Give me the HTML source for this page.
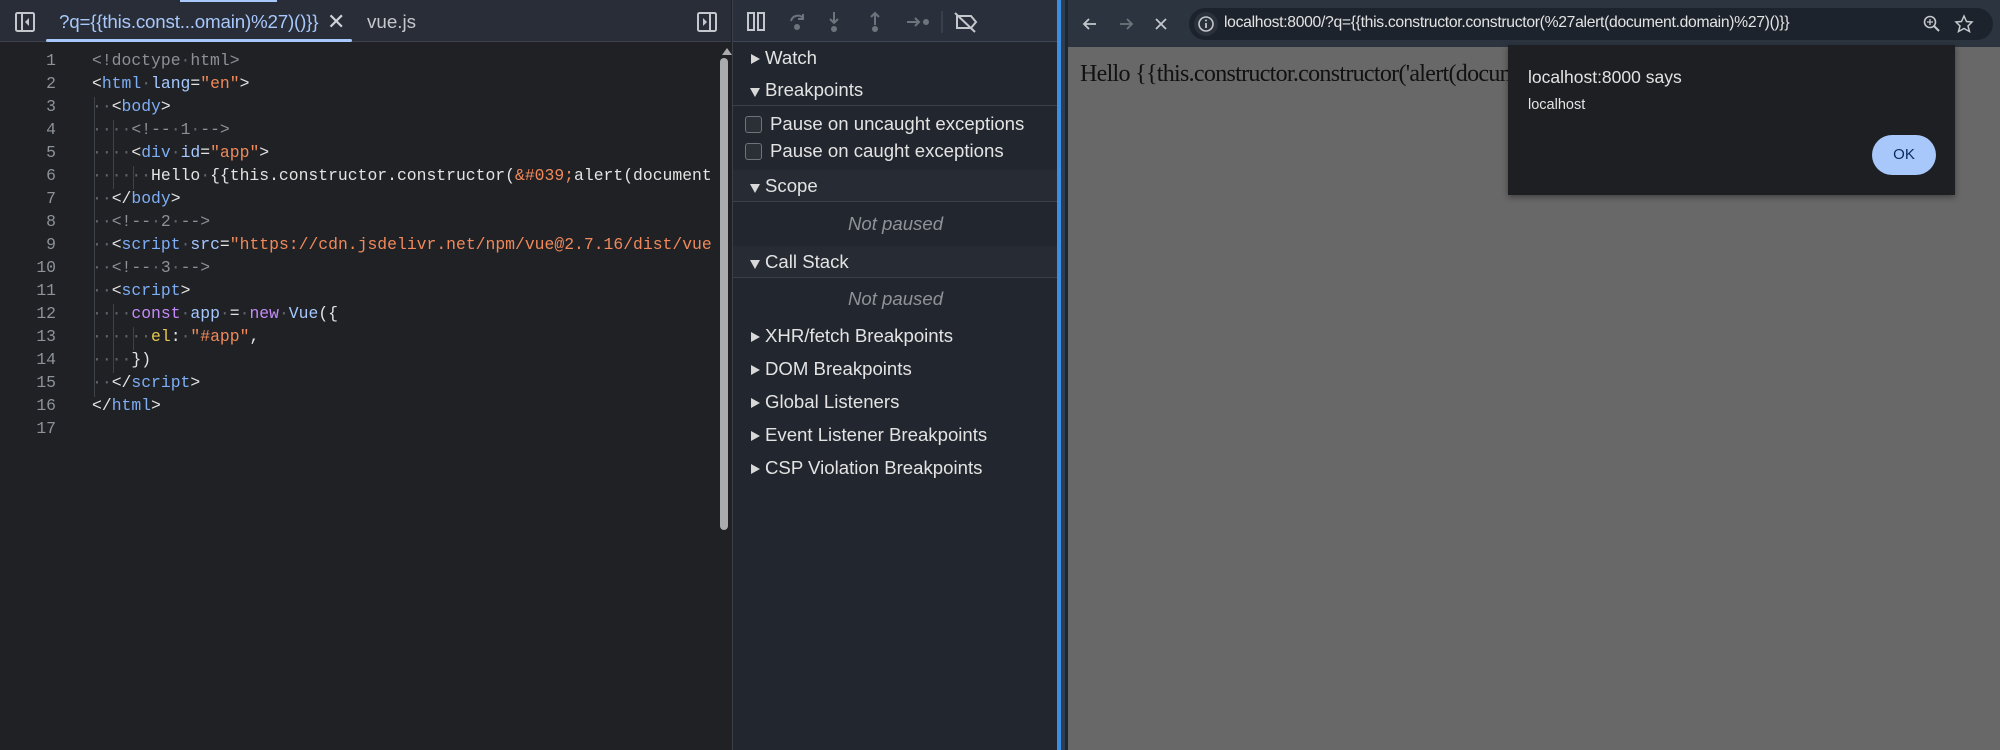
<!DOCTYPE html>
<html><head><meta charset="utf-8"><style>
*{margin:0;padding:0;box-sizing:border-box}
body{width:2000px;height:750px;overflow:hidden;background:#202124;font-family:"Liberation Sans",sans-serif;position:relative}
.abs{position:absolute}
#ed{left:0;top:0;width:731px;height:750px;background:#1f2125}
#tabs{left:0;top:0;width:731px;height:42px;background:#282d37;border-bottom:1px solid #3c414b}
.ln{position:absolute;left:0;width:56px;text-align:right;color:#8e939a;font:16.4px "Liberation Mono",monospace}
.cl{position:absolute;left:92px;white-space:pre;color:#e3e3e3;font:16.4px "Liberation Mono",monospace}
.d{color:#5f636a}.t{color:#7eaef5}.a{color:#a6c8ff}.s{color:#f1895a}.c{color:#8c9096}.k{color:#c58af9}.y{color:#e6c84e}
.g{position:absolute;width:1px;background:#3e4249}
#dbg{left:732px;top:0;width:325px;height:750px;background:#22262e;border-left:1px solid #3a3f48}
#dtb{left:0;top:0;width:325px;height:42px;background:#2a303b;border-bottom:1px solid #404652}
.row{position:absolute;left:0;width:325px;color:#e3e3e3;font-size:18.6px;height:24px}
.row .tr,.row .td{position:absolute;left:18px;top:7px;width:0;height:0}
.row .tr{border-left:9px solid #d8d8d8;border-top:5.5px solid transparent;border-bottom:5.5px solid transparent}
.row .td{top:9px;border-top:9px solid #d8d8d8;border-left:5.5px solid transparent;border-right:5.5px solid transparent;left:17px}
.row .lb{position:absolute;left:32px;top:0}
.hdr{background:#272b33;border-bottom:1px solid #3b404a}
.np{position:absolute;width:325px;text-align:center;color:#8f9399;font-style:italic;font-size:18.6px}
.cb{position:absolute;left:12px;width:17px;height:17px;border:1.5px solid #6f737a;border-radius:3px;background:#2b2f36}
</style></head><body>
<div id="ed" class="abs">
 <div id="tabs" class="abs">
  <div class="abs" style="left:180px;top:0;width:97px;height:2px;background:#a8c7fa"></div>
  <svg class="abs" style="left:15px;top:12px" width="20" height="20" viewBox="0 0 20 20"><rect x="1" y="1" width="18" height="18" rx="1.5" fill="none" stroke="#c4c7cc" stroke-width="2"/><line x1="7" y1="1" x2="7" y2="19" stroke="#c4c7cc" stroke-width="2"/><path d="M14 6 L10 10 L14 14Z" fill="#c4c7cc"/></svg>
  <div class="abs" style="left:59px;top:11px;color:#a8c7fa;font-size:18.8px;letter-spacing:-0.2px">?q={{this.const...omain)%27)()}}</div>
  <div class="abs" style="left:327px;top:9px;color:#d0d3d8;font-size:22px">✕</div>
  <div class="abs" style="left:367px;top:11px;color:#c4c7cc;font-size:18.8px">vue.js</div>
  <div class="abs" style="left:46px;top:39px;width:306px;height:3px;border-radius:2px;background:#a8c7fa"></div>
  <svg class="abs" style="left:697px;top:12px" width="20" height="20" viewBox="0 0 20 20"><rect x="1" y="1" width="18" height="18" rx="1.5" fill="none" stroke="#c4c7cc" stroke-width="2"/><line x1="13" y1="1" x2="13" y2="19" stroke="#c4c7cc" stroke-width="2"/><path d="M6 6 L10 10 L6 14Z" fill="#c4c7cc"/></svg>
 </div>
 <div class="abs" style="left:722px;top:48px;width:0;height:0;border-bottom:7px solid #a9abae;border-left:5px solid transparent;border-right:5px solid transparent"></div>
 <div class="abs" style="left:720px;top:58px;width:8px;height:472px;background:#a9abae;border-radius:4px"></div>
 <div class="g" style="left:94px;top:97px;height:300px"></div>
 <div class="g" style="left:113px;top:120px;height:69px"></div>
 <div class="g" style="left:133px;top:166px;height:23px"></div>
 <div class="g" style="left:113px;top:304px;height:69px"></div>
 <div class="g" style="left:133px;top:327px;height:23px"></div>
 <div class="ln" style="top:51px">1</div><div class="cl" style="top:51px"><span class="c">&lt;!doctype<span class="d">·</span>html&gt;</span></div>
 <div class="ln" style="top:74px">2</div><div class="cl" style="top:74px">&lt;<span class="t">html</span><span class="d">·</span><span class="a">lang</span>=<span class="s">"en"</span>&gt;</div>
 <div class="ln" style="top:97px">3</div><div class="cl" style="top:97px"><span class="d">··</span>&lt;<span class="t">body</span>&gt;</div>
 <div class="ln" style="top:120px">4</div><div class="cl" style="top:120px"><span class="d">····</span><span class="c">&lt;!--<span class="d">·</span>1<span class="d">·</span>--&gt;</span></div>
 <div class="ln" style="top:143px">5</div><div class="cl" style="top:143px"><span class="d">····</span>&lt;<span class="t">div</span><span class="d">·</span><span class="a">id</span>=<span class="s">"app"</span>&gt;</div>
 <div class="ln" style="top:166px">6</div><div class="cl" style="top:166px"><span class="d">······</span>Hello<span class="d">·</span>{{this.constructor.constructor(<span class="s">&amp;#039;</span>alert(document</div>
 <div class="ln" style="top:189px">7</div><div class="cl" style="top:189px"><span class="d">··</span>&lt;/<span class="t">body</span>&gt;</div>
 <div class="ln" style="top:212px">8</div><div class="cl" style="top:212px"><span class="d">··</span><span class="c">&lt;!--<span class="d">·</span>2<span class="d">·</span>--&gt;</span></div>
 <div class="ln" style="top:235px">9</div><div class="cl" style="top:235px"><span class="d">··</span>&lt;<span class="t">script</span><span class="d">·</span><span class="a">src</span>=<span class="s">"https://cdn.jsdelivr.net/npm/vue@2.7.16/dist/vue</span></div>
 <div class="ln" style="top:258px">10</div><div class="cl" style="top:258px"><span class="d">··</span><span class="c">&lt;!--<span class="d">·</span>3<span class="d">·</span>--&gt;</span></div>
 <div class="ln" style="top:281px">11</div><div class="cl" style="top:281px"><span class="d">··</span>&lt;<span class="t">script</span>&gt;</div>
 <div class="ln" style="top:304px">12</div><div class="cl" style="top:304px"><span class="d">····</span><span class="k">const</span><span class="d">·</span><span class="a">app</span><span class="d">·</span>=<span class="d">·</span><span class="k">new</span><span class="d">·</span><span class="a">Vue</span>({</div>
 <div class="ln" style="top:327px">13</div><div class="cl" style="top:327px"><span class="d">······</span><span class="y">el</span>:<span class="d">·</span><span class="s">"#app"</span>,</div>
 <div class="ln" style="top:350px">14</div><div class="cl" style="top:350px"><span class="d">····</span>})</div>
 <div class="ln" style="top:373px">15</div><div class="cl" style="top:373px"><span class="d">··</span>&lt;/<span class="t">script</span>&gt;</div>
 <div class="ln" style="top:396px">16</div><div class="cl" style="top:396px">&lt;/<span class="t">html</span>&gt;</div>
 <div class="ln" style="top:419px">17</div>
</div>

<div id="dbg" class="abs">
 <div id="dtb" class="abs">
  <svg class="abs" style="left:14px;top:11px" width="300" height="22" viewBox="0 0 300 22">
   <rect x="1" y="2" width="6" height="17" fill="none" stroke="#c4c7cc" stroke-width="2"/><rect x="11" y="2" width="6" height="17" fill="none" stroke="#c4c7cc" stroke-width="2"/>
   <path d="M44 10 a7 7 0 0 1 12 -3 M56 3 v5 h-5" fill="none" stroke="#6f747c" stroke-width="2"/><circle cx="50" cy="16" r="3" fill="#6f747c"/>
   <path d="M87 1 v11 M83 8 l4 4 4 -4" fill="none" stroke="#6f747c" stroke-width="2"/><circle cx="87" cy="18" r="3" fill="#6f747c"/>
   <path d="M128 14 v-12 M124 6 l4 -4 4 4" fill="none" stroke="#6f747c" stroke-width="2"/><circle cx="128" cy="18" r="3" fill="#6f747c"/>
   <path d="M160 11 h12 M168 7 l4 4 -4 4" fill="none" stroke="#6f747c" stroke-width="2"/><circle cx="179" cy="11" r="3" fill="#6f747c"/>
   <line x1="195" y1="0" x2="195" y2="22" stroke="#4a4f58" stroke-width="1"/>
   <path d="M210 5 h14 l5 6 -5 6 h-14z" fill="none" stroke="#c4c7cc" stroke-width="2"/><line x1="208" y1="2" x2="228" y2="21" stroke="#c4c7cc" stroke-width="2"/>
  </svg>
 </div>
 <div class="row" style="top:47px"><span class="tr"></span><span class="lb">Watch</span></div>
 <div class="row" style="top:79px;height:27px;border-bottom:1px solid #3b404a"><span class="td"></span><span class="lb">Breakpoints</span></div>
 <div class="cb" style="top:116px"></div><div class="row" style="top:113px"><span class="lb" style="left:37px">Pause on uncaught exceptions</span></div>
 <div class="cb" style="top:143px"></div><div class="row" style="top:140px"><span class="lb" style="left:37px">Pause on caught exceptions</span></div>
 <div class="row hdr" style="top:170px;height:32px"><span class="td" style="top:14px"></span><span class="lb" style="top:5px">Scope</span></div>
 <div class="np" style="top:213px">Not paused</div>
 <div class="row hdr" style="top:246px;height:32px"><span class="td" style="top:14px"></span><span class="lb" style="top:5px">Call Stack</span></div>
 <div class="np" style="top:288px">Not paused</div>
 <div class="row" style="top:325px"><span class="tr"></span><span class="lb">XHR/fetch Breakpoints</span></div>
 <div class="row" style="top:358px"><span class="tr"></span><span class="lb">DOM Breakpoints</span></div>
 <div class="row" style="top:391px"><span class="tr"></span><span class="lb">Global Listeners</span></div>
 <div class="row" style="top:424px"><span class="tr"></span><span class="lb">Event Listener Breakpoints</span></div>
 <div class="row" style="top:457px"><span class="tr"></span><span class="lb">CSP Violation Breakpoints</span></div>
</div>

<div class="abs" style="left:1057px;top:0;width:4px;height:750px;background:#3a8ee6"></div>
<div class="abs" style="left:1061px;top:0;width:4px;height:750px;background:#2e3e4e"></div>
<div class="abs" style="left:1065px;top:0;width:4px;height:750px;background:#1f2630"></div>
<div class="abs" style="left:1068px;top:0;width:932px;height:47px;background:#2c3440"></div>
<div class="abs" style="left:1068px;top:47px;width:932px;height:703px;background:#686868"></div>
<svg class="abs" style="left:1080px;top:14px" width="100" height="20" viewBox="0 0 100 20">
 <path d="M16 10 H4 M9 5 L4 10 9 15" fill="none" stroke="#c4c7cc" stroke-width="1.8"/>
 <path d="M40 10 H52 M47 5 L52 10 47 15" fill="none" stroke="#6f747c" stroke-width="1.8"/>
 <path d="M76 5 L86 15 M86 5 L76 15" fill="none" stroke="#c4c7cc" stroke-width="1.8"/>
</svg>
<div class="abs" style="left:1189px;top:8px;width:804px;height:32px;border-radius:16px;background:#1d232c"></div>
<div class="abs" style="left:1194px;top:12px;width:24px;height:24px;border-radius:12px;background:#2a313b"></div>
<svg class="abs" style="left:1197px;top:15px" width="18" height="18" viewBox="0 0 18 18"><circle cx="9" cy="9" r="7" fill="none" stroke="#c4c7cc" stroke-width="1.6"/><line x1="9" y1="8" x2="9" y2="13" stroke="#c4c7cc" stroke-width="1.8"/><circle cx="9" cy="5.5" r="1" fill="#c4c7cc"/></svg>
<div class="abs" style="left:1224px;top:14px;color:#e3e3e3;font-size:15.7px;letter-spacing:-0.3px">localhost:8000/?q={{this.constructor.constructor(%27alert(document.domain)%27)()}}</div>
<svg class="abs" style="left:1922px;top:14px" width="60" height="20" viewBox="0 0 60 20"><circle cx="8" cy="8" r="5.5" fill="none" stroke="#c4c7cc" stroke-width="1.6"/><line x1="12" y1="12" x2="17" y2="17" stroke="#c4c7cc" stroke-width="2"/><path d="M8 5v6M5 8h6" stroke="#c4c7cc" stroke-width="1.3"/><path d="M42 2 L44.5 7.5 50 8 46 12 47.5 17.5 42 14.5 36.5 17.5 38 12 34 8 39.5 7.5Z" fill="none" stroke="#c4c7cc" stroke-width="1.5"/></svg>
<div class="abs" style="left:1080px;top:61px;color:#111;font:24px 'Liberation Serif',serif;letter-spacing:-0.7px">Hello {{this.constructor.constructor('alert(document.domain)')()}}</div>
<div class="abs" style="left:1508px;top:45px;width:447px;height:150px;background:#1d1f23;box-shadow:0 2px 6px rgba(0,0,0,.4)">
 <div class="abs" style="left:20px;top:22px;color:#e3e3e3;font-size:17.5px">localhost:8000 says</div>
 <div class="abs" style="left:20px;top:52px;color:#e3e3e3;font-size:14.5px">localhost</div>
 <div class="abs" style="left:364px;top:90px;width:64px;height:40px;border-radius:20px;background:#a8c7fa;color:#0b2a5a;font-size:15px;text-align:center;line-height:40px">OK</div>
</div>
</body></html>
